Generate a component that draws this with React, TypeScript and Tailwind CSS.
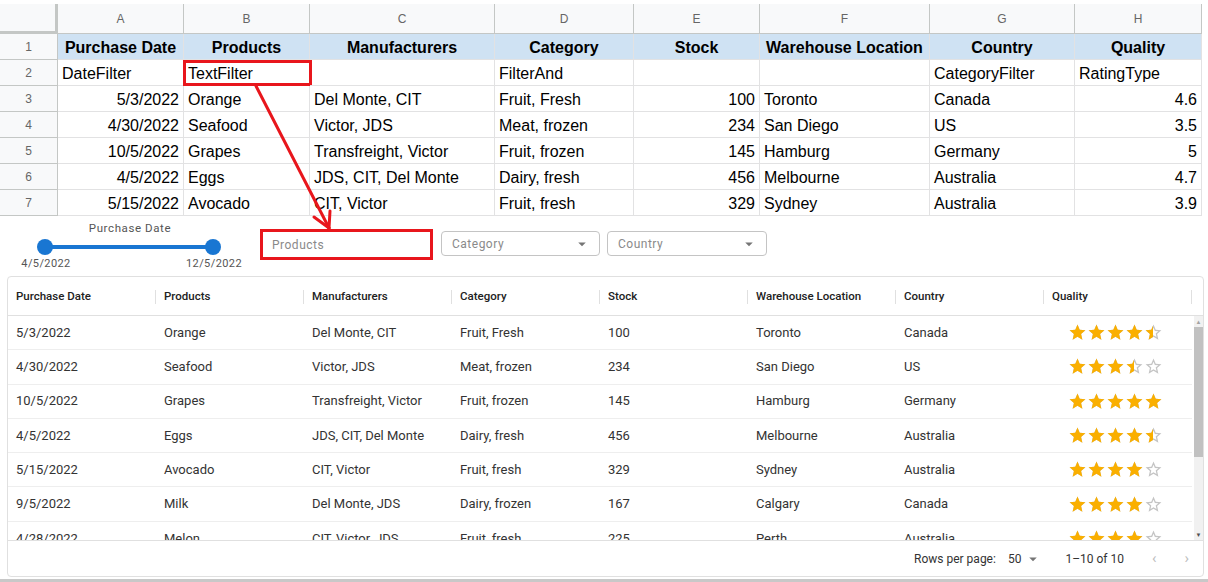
import React from "react";

const RED = "#e8161c";

const sheetCols = ["A", "B", "C", "D", "E", "F", "G", "H"];
const colTemplate =
  "grid-cols-[58px_126px_126px_185px_139px_126px_170px_145px_127px]";

type Cell = { v: string; align?: "left" | "right" | "center" };

const sheetRows: Cell[][] = [
  [
    { v: "DateFilter" },
    { v: "TextFilter" },
    { v: "" },
    { v: "FilterAnd" },
    { v: "" },
    { v: "" },
    { v: "CategoryFilter" },
    { v: "RatingType" },
  ],
  [
    { v: "5/3/2022", align: "right" },
    { v: "Orange" },
    { v: "Del Monte, CIT" },
    { v: "Fruit, Fresh" },
    { v: "100", align: "right" },
    { v: "Toronto" },
    { v: "Canada" },
    { v: "4.6", align: "right" },
  ],
  [
    { v: "4/30/2022", align: "right" },
    { v: "Seafood" },
    { v: "Victor, JDS" },
    { v: "Meat, frozen" },
    { v: "234", align: "right" },
    { v: "San Diego" },
    { v: "US" },
    { v: "3.5", align: "right" },
  ],
  [
    { v: "10/5/2022", align: "right" },
    { v: "Grapes" },
    { v: "Transfreight, Victor" },
    { v: "Fruit, frozen" },
    { v: "145", align: "right" },
    { v: "Hamburg" },
    { v: "Germany" },
    { v: "5", align: "right" },
  ],
  [
    { v: "4/5/2022", align: "right" },
    { v: "Eggs" },
    { v: "JDS, CIT, Del Monte" },
    { v: "Dairy, fresh" },
    { v: "456", align: "right" },
    { v: "Melbourne" },
    { v: "Australia" },
    { v: "4.7", align: "right" },
  ],
  [
    { v: "5/15/2022", align: "right" },
    { v: "Avocado" },
    { v: "CIT, Victor" },
    { v: "Fruit, fresh" },
    { v: "329", align: "right" },
    { v: "Sydney" },
    { v: "Australia" },
    { v: "3.9", align: "right" },
  ],
];

const headers = [
  "Purchase Date",
  "Products",
  "Manufacturers",
  "Category",
  "Stock",
  "Warehouse Location",
  "Country",
  "Quality",
];

const gridRows = [
  ["5/3/2022", "Orange", "Del Monte, CIT", "Fruit, Fresh", "100", "Toronto", "Canada", 4.5],
  ["4/30/2022", "Seafood", "Victor, JDS", "Meat, frozen", "234", "San Diego", "US", 3.5],
  ["10/5/2022", "Grapes", "Transfreight, Victor", "Fruit, frozen", "145", "Hamburg", "Germany", 5],
  ["4/5/2022", "Eggs", "JDS, CIT, Del Monte", "Dairy, fresh", "456", "Melbourne", "Australia", 4.5],
  ["5/15/2022", "Avocado", "CIT, Victor", "Fruit, fresh", "329", "Sydney", "Australia", 4],
  ["9/5/2022", "Milk", "Del Monte, JDS", "Dairy, frozen", "167", "Calgary", "Canada", 4],
  ["4/28/2022", "Melon", "CIT, Victor, JDS", "Fruit, fresh", "225", "Perth", "Australia", 4],
];

const STAR = "M12 17.27L18.18 21l-1.64-7.03L22 9.24l-7.19-.61L12 2 9.19 8.63 2 9.24l5.46 4.73L5.82 21z";
const STAR_BORDER =
  "M22 9.24l-7.19-.62L12 2 9.19 8.63 2 9.24l5.46 4.73L5.82 21 12 17.27 18.18 21l-1.63-7.03L22 9.24zM12 15.4l-3.76 2.27 1-4.28-3.32-2.88 4.38-.38L12 6.1l1.71 4.04 4.38.38-3.32 2.88 1 4.28L12 15.4z";

const Star = ({ fill }: { fill: number }) => (
  <span className="relative inline-block w-[19px] h-[19px]">
    <svg viewBox="0 0 24 24" className="absolute inset-0 w-[19px] h-[19px]" fill="#c4c4c4">
      <path d={STAR_BORDER} />
    </svg>
    {fill > 0 && (
      <span
        className="absolute left-0 top-0 h-[19px] overflow-hidden"
        style={{ width: `${fill * 19}px` }}
      >
        <svg viewBox="0 0 24 24" className="w-[19px] h-[19px]" fill="#faaf00">
          <path d={STAR} />
        </svg>
      </span>
    )}
  </span>
);

const Rating = ({ value }: { value: number }) => (
  <div className="flex">
    {[0, 1, 2, 3, 4].map((i) => (
      <Star key={i} fill={Math.max(0, Math.min(1, value - i))} />
    ))}
  </div>
);

const Caret = () => (
  <svg viewBox="0 0 24 24" className="w-[18px] h-[18px]" fill="#757575">
    <path d="M7 10l5 5 5-5z" />
  </svg>
);

const Spreadsheet = () => (
  <div className={`grid ${colTemplate} w-[1202px] font-['Liberation_Sans',Arial,sans-serif] text-black`}>
    {/* column letters */}
    <div className="h-[30px] bg-[#f8f9fa] border-r-[3px] border-b-[3px] border-[#c4c7c5]" />
    {sheetCols.map((c) => (
      <div
        key={c}
        className="h-[30px] bg-[#f8f9fa] border-r border-b border-[#c4c7c5] flex items-center justify-center text-[12px] text-[#666]"
      >
        {c}
      </div>
    ))}
    {/* header row 1 */}
    <div className="h-[26px] bg-[#f8f9fa] border-r border-b border-[#c4c7c5] flex items-center justify-center text-[12px] text-[#666]">
      1
    </div>
    {headers.map((h) => (
      <div
        key={h}
        className="h-[26px] pt-[3px] bg-[#cfe2f3] border-r border-b border-[#e2e2e3] flex items-center justify-center text-[16px] font-bold whitespace-nowrap"
      >
        {h}
      </div>
    ))}
    {sheetRows.map((row, ri) => (
      <React.Fragment key={ri}>
        <div className="h-[26px] bg-[#f8f9fa] border-r border-b border-[#c4c7c5] flex items-center justify-center text-[12px] text-[#666]">
          {ri + 2}
        </div>
        {row.map((cell, ci) => (
          <div
            key={ci}
            className={`relative h-[26px] pt-[3px] border-r border-b border-[#e2e2e3] flex items-center px-[4px] text-[16px] whitespace-nowrap ${
              cell.align === "right" ? "justify-end" : "justify-start"
            }`}
          >
            {cell.v}
            {ri === 0 && ci === 1 && (
              <div className="absolute left-[-1px] top-[0px] w-[129px] h-[26px] border-[3px] border-[#e8161c]" />
            )}
          </div>
        ))}
      </React.Fragment>
    ))}
  </div>
);

const Filters = () => (
  <div className="flex items-start h-[60px] font-['Roboto',sans-serif]">
    {/* date range slider */}
    <div className="ml-[16px] w-[228px] flex flex-col items-center">
      <div className="mt-[6px] text-[11.5px] leading-[13px] text-[#555] tracking-[0.6px]">Purchase Date</div>
      <div className="relative w-[184px] h-[16px] mt-[4px] ml-[-3px]">
        <div className="absolute left-[8px] right-[8px] top-[6px] h-[4px] bg-[#1976d2]" />
        <div className="absolute left-0 top-0 w-[16px] h-[16px] rounded-full bg-[#1976d2]" />
        <div className="absolute right-0 top-0 w-[16px] h-[16px] rounded-full bg-[#1976d2]" />
      </div>
      <div className="w-full flex justify-between text-[11px] leading-[13px] text-[#555] tracking-[0.4px] mt-[2px]">
        <span className="w-[60px] text-center">4/5/2022</span>
        <span className="w-[60px] text-center">12/5/2022</span>
      </div>
    </div>
    {/* products text filter */}
    <div className="ml-[16px] mt-[13px] w-[173px] h-[31px] border-[3px] border-[#e8161c] flex items-center pl-[9px] text-[12px] tracking-[0.5px] text-[#8a8a8a]">
      Products
    </div>
    <div className="ml-[8px] mt-[15px] w-[159px] h-[25px] border border-[#c4c4c4] rounded-[4px] flex items-center justify-between pl-[10px] pr-[8px] text-[12px] tracking-[0.5px] text-[#8a8a8a]">
      <span>Category</span>
      <Caret />
    </div>
    <div className="ml-[7px] mt-[15px] w-[160px] h-[25px] border border-[#c4c4c4] rounded-[4px] flex items-center justify-between pl-[10px] pr-[8px] text-[12px] tracking-[0.5px] text-[#8a8a8a]">
      <span>Country</span>
      <Caret />
    </div>
  </div>
);

const DataGrid = () => (
  <div className="ml-[7px] w-[1197px] h-[301px] border border-[#e0e0e0] rounded-[4px] flex flex-col overflow-hidden font-['Roboto',sans-serif] text-[13px] text-[#333]">
    <div className="h-[39px] shrink-0 flex border-b border-[#e0e0e0] text-[11.5px]">
      {headers.map((h) => (
        <div key={h} className="w-[148px] shrink-0 flex items-center justify-between pl-[8px] pt-[1px] font-medium text-[#222]">
          <span>{h}</span>
          <span className="w-px h-[14px] bg-[#e0e0e0]" />
        </div>
      ))}
    </div>
    <div className="flex h-[224px] shrink-0 overflow-hidden">
      <div className="w-[1184px] shrink-0">
        {gridRows.map((r, i) => (
          <div key={i} className="h-[34.3px] flex border-b border-[#eeeeee]">
            {r.slice(0, 7).map((c, j) => (
              <div key={j} className="w-[148px] shrink-0 flex items-center pl-[8px]">
                {c}
              </div>
            ))}
            <div className="w-[148px] shrink-0 flex items-center justify-center pr-[6px]">
              <Rating value={r[7] as number} />
            </div>
          </div>
        ))}
      </div>
      {/* vertical scrollbar */}
      <div className="ml-[2px] w-[11px] h-full bg-[#f1f1f1] flex flex-col items-center">
        <div className="h-[11px] flex items-center justify-center text-[6px] text-[#a3a3a3]">▲</div>
        <div className="w-[9px] h-[130px] bg-[#c1c1c1]" />
        <div className="flex-1" />
        <div className="h-[11px] flex items-center justify-center text-[6px] text-[#505050]">▼</div>
      </div>
    </div>
    <div className="flex-1 border-t border-[#e0e0e0] flex items-center justify-end text-[12px] text-[#333]">
      <span>Rows per page:</span>
      <span className="ml-[12px]">50</span>
      <span className="ml-[3px]">
        <Caret />
      </span>
      <span className="ml-[23px]">1–10 of 10</span>
      <span className="ml-[28px] text-[#bdbdbd] text-[15px]">‹</span>
      <span className="ml-[28px] mr-[14px] text-[#bdbdbd] text-[15px]">›</span>
    </div>
  </div>
);

export default function App() {
  return (
    <div className="relative w-[1208px] h-[582px] bg-white overflow-hidden">
      <div className="pt-[4px]">
        <Spreadsheet />
      </div>
      <Filters />
      <DataGrid />
      <div className="mt-[2px] h-[3px] bg-[#c8c8c8]" />
      {/* annotation arrow */}
      <svg className="absolute left-0 top-0 pointer-events-none" width="1208" height="582">
        <g stroke={RED} strokeWidth="3" strokeLinecap="round" fill="none">
          <line x1="256" y1="86" x2="329" y2="228" />
          <line x1="329" y1="228" x2="330" y2="211" />
          <line x1="329" y1="228" x2="314" y2="217" />
        </g>
      </svg>
    </div>
  );
}
